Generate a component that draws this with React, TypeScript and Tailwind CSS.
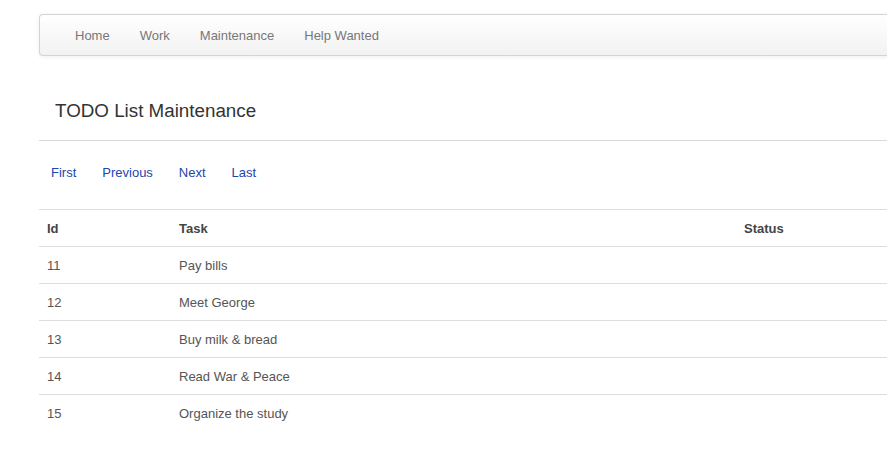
import React from 'react'

const navItems = ['Home', 'Work', 'Maintenance', 'Help Wanted']

const todos = [
  { id: 11, task: 'Pay bills', status: '' },
  { id: 12, task: 'Meet George', status: '' },
  { id: 13, task: 'Buy milk & bread', status: '' },
  { id: 14, task: 'Read War & Peace', status: '' },
  { id: 15, task: 'Organize the study', status: '' },
]

const pager = ['First', 'Previous', 'Next', 'Last']

function Navbar() {
  return (
    <div className="h-[42px] rounded-l-[4px] border border-r-0 border-[#d4d4d4] bg-gradient-to-b from-white to-[#f2f2f2] pl-5 shadow-[0_1px_4px_rgba(0,0,0,0.065)]">
      <ul className="flex h-10">
        {navItems.map((item) => (
          <li key={item}>
            <a href="#" className="block px-[15px] pb-[9px] pt-[11px] text-[13px] leading-5 text-[#777]">
              {item}
            </a>
          </li>
        ))}
      </ul>
    </div>
  )
}

export default function App() {
  return (
    <div className="min-h-screen overflow-hidden bg-white font-['Liberation_Sans',Arial,sans-serif] text-[13px] leading-5 text-[#555]">
      <div className="w-[940px] pl-[39px] pt-[14px]">
        <Navbar />

        <div className="mt-[35px] border-b border-[#d9d9d9] pb-[9px] pl-4">
          <h1 className="text-[18.8px] leading-10 text-[#333]">TODO List Maintenance</h1>
        </div>

        <div className="mt-[22px] flex pl-3">
          {pager.map((p) => (
            <a key={p} href="#" className="mr-[26px] text-[13px] leading-5 text-[#1c45ae]">
              {p}
            </a>
          ))}
        </div>

        <table className="mt-[26px] w-full border-collapse text-left">
          <thead>
            <tr className="border-t border-[#ddd]">
              <th className="w-[132px] px-2 pb-[7px] pt-[9px] font-bold text-[#444]">Id</th>
              <th className="w-[565px] px-2 pb-[7px] pt-[9px] font-bold text-[#444]">Task</th>
              <th className="px-2 pb-[7px] pt-[9px] font-bold text-[#444]">Status</th>
            </tr>
          </thead>
          <tbody>
            {todos.map((t) => (
              <tr key={t.id} className="border-t border-[#ddd]">
                <td className="px-2 pb-[7px] pt-[9px]">{t.id}</td>
                <td className="px-2 pb-[7px] pt-[9px]">{t.task}</td>
                <td className="px-2 pb-[7px] pt-[9px]">{t.status}</td>
              </tr>
            ))}
          </tbody>
        </table>
      </div>
    </div>
  )
}
